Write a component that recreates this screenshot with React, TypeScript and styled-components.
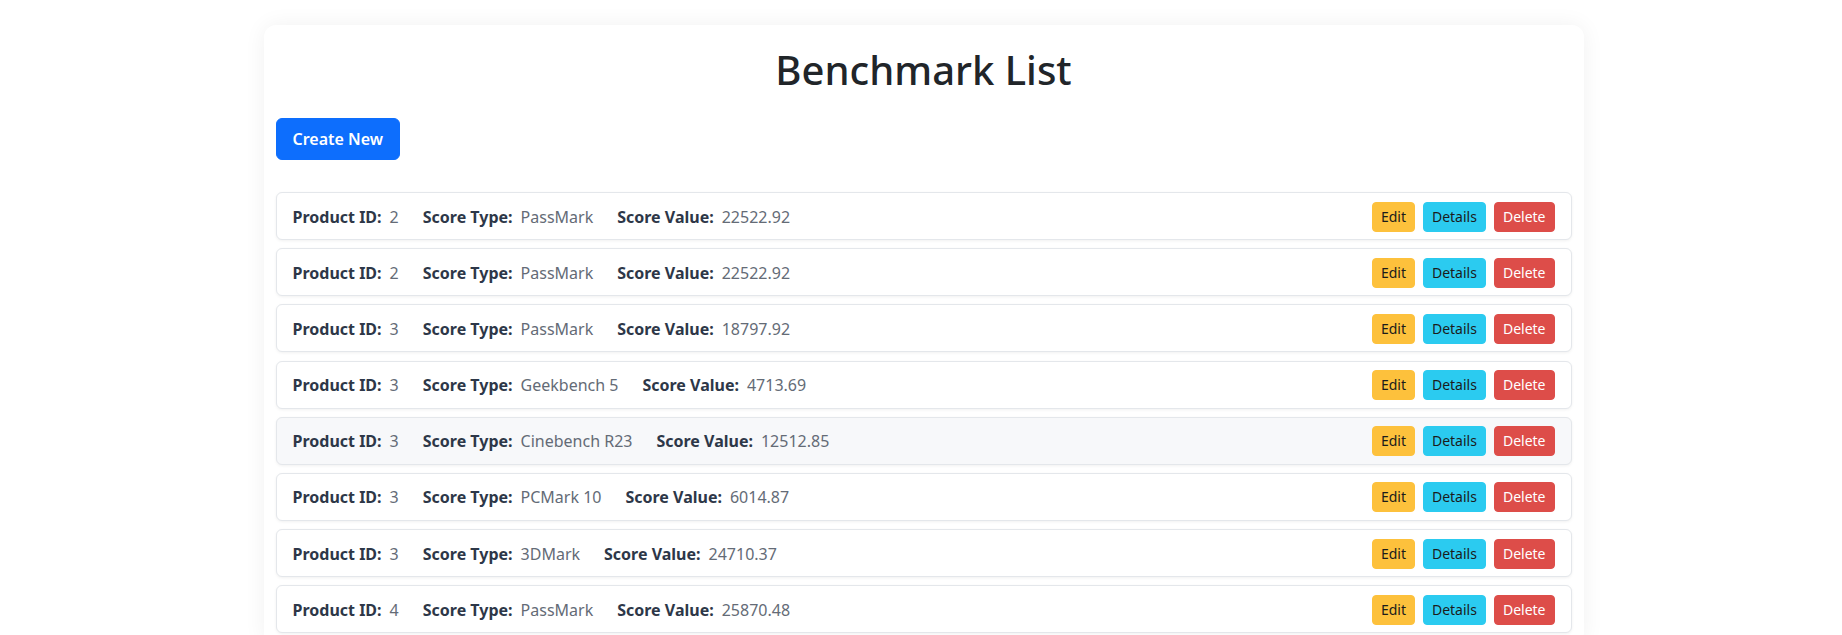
import React from "react";
import styled, { createGlobalStyle } from "styled-components";

const GlobalStyle = createGlobalStyle`
  html, body {
    margin: 0;
    padding: 0;
    background: #ffffff;
    font-family: "Noto Sans", "Open Sans", "Liberation Sans", sans-serif;
    color: #212529;
  }
  * { box-sizing: border-box; }
`;

const Page = styled.div`
  padding: 25px 0 0 5px;
`;

const Card = styled.div`
  width: 1320px;
  margin: 0 auto;
  background: #ffffff;
  border-radius: 12px;
  box-shadow: 0 0 22px rgba(0, 0, 0, 0.06);
  padding: 21px 12px 12px;
`;

const Title = styled.h1`
  margin: 0 0 24px;
  font-size: 40px;
  line-height: 48px;
  font-weight: 500;
  text-align: center;
  color: #212529;
`;

const PrimaryButton = styled.button`
  display: inline-block;
  font-family: inherit;
  font-size: 16px;
  font-weight: 600;
  line-height: 24px;
  padding: 8px 16px;
  border: 1px solid #0d6efd;
  border-radius: 6px;
  background: #0d6efd;
  color: #ffffff;
  cursor: pointer;
`;

const List = styled.div`
  margin-top: 32px;
  display: flex;
  flex-direction: column;
  gap: 8.2px;
`;

const Row = styled.div<{ $active?: boolean }>`
  display: flex;
  align-items: center;
  justify-content: space-between;
  height: 48px;
  padding: 1px 16px 0;
  border: 1px solid #e4e7eb;
  border-radius: 6px;
  background: ${(p) => (p.$active ? "#f7f8fa" : "#ffffff")};
  box-shadow: 0 1px 3px rgba(0, 0, 0, 0.06);
`;

const Fields = styled.div`
  display: flex;
  align-items: center;
  gap: 24px;
  font-size: 16px;
  line-height: 24px;
`;

const Field = styled.span`
  display: inline-flex;
  align-items: baseline;
`;

const Label = styled.strong`
  font-weight: 700;
  color: #2d3748;
  margin-right: 8px;
`;

const Value = styled.span`
  color: #646b76;
`;

const Actions = styled.div`
  display: flex;
  gap: 8px;
`;

const variants = {
  edit: { bg: "#fdc13c", fg: "#1b1b1b" },
  details: { bg: "#2bcbf0", fg: "#1b1b1b" },
  delete: { bg: "#dd4d49", fg: "#ffffff" },
};

const SmallButton = styled.button<{ $variant: keyof typeof variants }>`
  font-family: inherit;
  font-size: 14px;
  line-height: 20px;
  padding: 4px 8px;
  border: 1px solid ${(p) => variants[p.$variant].bg};
  border-radius: 4px;
  background: ${(p) => variants[p.$variant].bg};
  color: ${(p) => variants[p.$variant].fg};
  cursor: pointer;
`;

const rows = [
  { id: 2, type: "PassMark", value: "22522.92" },
  { id: 2, type: "PassMark", value: "22522.92" },
  { id: 3, type: "PassMark", value: "18797.92" },
  { id: 3, type: "Geekbench 5", value: "4713.69" },
  { id: 3, type: "Cinebench R23", value: "12512.85", active: true },
  { id: 3, type: "PCMark 10", value: "6014.87" },
  { id: 3, type: "3DMark", value: "24710.37" },
  { id: 4, type: "PassMark", value: "25870.48" },
];

export default function App() {
  return (
    <>
      <GlobalStyle />
      <Page>
        <Card>
          <Title>Benchmark List</Title>
          <PrimaryButton>Create New</PrimaryButton>
          <List>
            {rows.map((r, i) => (
              <Row key={i} $active={r.active}>
                <Fields>
                  <Field>
                    <Label>Product ID:</Label>
                    <Value>{r.id}</Value>
                  </Field>
                  <Field>
                    <Label>Score Type:</Label>
                    <Value>{r.type}</Value>
                  </Field>
                  <Field>
                    <Label>Score Value:</Label>
                    <Value>{r.value}</Value>
                  </Field>
                </Fields>
                <Actions>
                  <SmallButton $variant="edit">Edit</SmallButton>
                  <SmallButton $variant="details">Details</SmallButton>
                  <SmallButton $variant="delete">Delete</SmallButton>
                </Actions>
              </Row>
            ))}
          </List>
        </Card>
      </Page>
    </>
  );
}
